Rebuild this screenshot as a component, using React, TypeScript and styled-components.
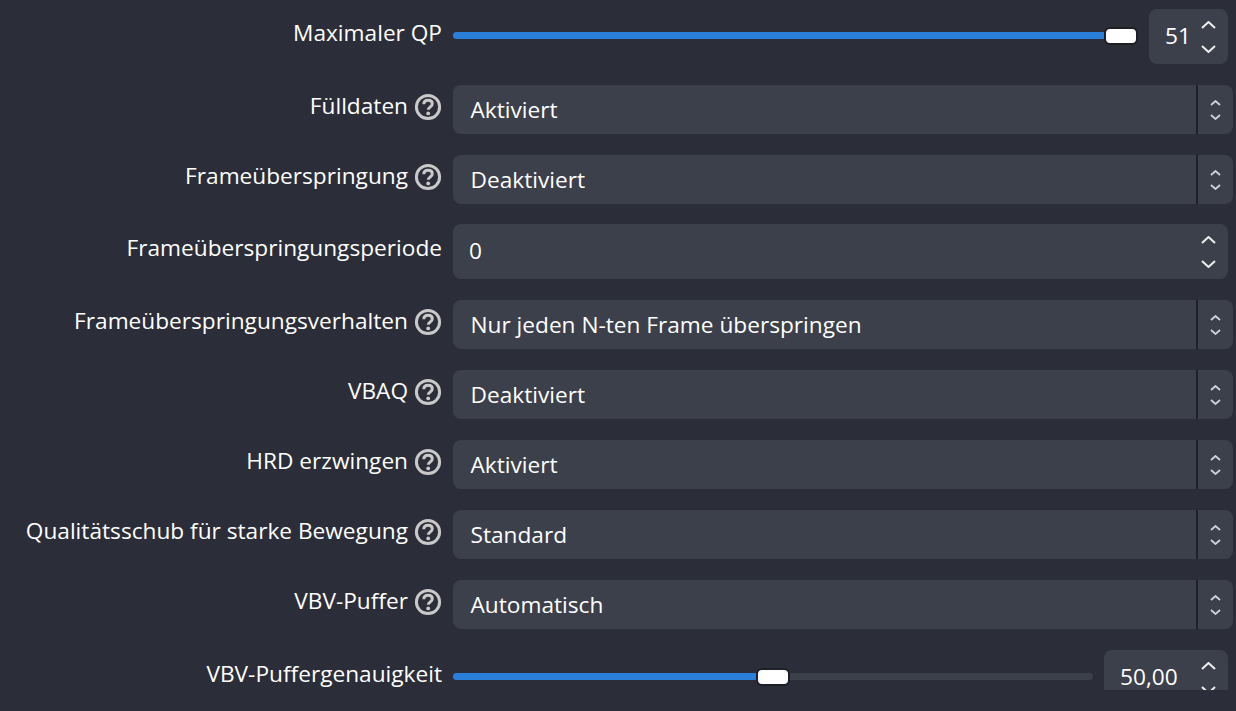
import React from 'react';
import styled, {createGlobalStyle} from 'styled-components';

const GlobalStyle = createGlobalStyle`
    html, body {
        margin: 0;
        padding: 0;
        height: 100%;
        background: #2b2e38;
    }

    body {
        font-family: "Open Sans", "Noto Sans", sans-serif;
        color: #fff;
        overflow: hidden;
    }
`;

const Viewport = styled.div`
    height: 690px;
    overflow: hidden;
`;

const Form = styled.div`
    display: grid;
    grid-template-columns: 442px 780px;
    column-gap: 11px;
    row-gap: 21px;
    padding-top: 9px;
    align-items: center;
`;

const LabelCell = styled.div`
    display: flex;
    justify-content: flex-end;
    align-items: center;
    gap: 6px;
    padding-bottom: 8px;
    font-size: 22.67px;
    line-height: 28px;
    white-space: nowrap;
`;

const HelpWrap = styled.span`
    display: flex;
    width: 28px;
    height: 28px;
    margin-bottom: -2px;
    color: #c9c9c9;
`;

const SliderRow = styled.div`
    display: flex;
    align-items: center;
    gap: 11px;
    padding-right: 5px;
`;

const Track = styled.div`
    position: relative;
    flex: 1;
    height: 7px;
    margin-top: -2px;
    border-radius: 4px;
    background: #3c404b;
`;

const Fill = styled.div<{ $value: number }>`
    width: calc((100% - 34px) * ${props => props.$value} + 4px);
    height: 100%;
    border-radius: 4px 0 0 4px;
    background: #2a7fdb;
`;

const Handle = styled.div<{ $value: number }>`
    position: absolute;
    top: -5px;
    left: calc((100% - 34px) * ${props => props.$value});
    box-sizing: border-box;
    width: 34px;
    height: 18px;
    border: 2px solid #1d1f27;
    border-radius: 6px;
    background: #fff;
`;

const SpinBox = styled.div<{ $width?: number }>`
    display: flex;
    align-items: center;
    justify-content: space-between;
    box-sizing: border-box;
    flex: none;
    width: ${props => props.$width ? `${props.$width}px` : 'auto'};
    height: 55px;
    padding: 0 12px 0 16px;
    border-radius: 8px;
    background: #3c404b;
    font-size: 22.67px;
`;

const SpinField = styled(SpinBox)`
    margin: -1px 5px 0 0;
`;

const SpinValue = styled.span`
    margin-bottom: 2px;
`;

const SpinArrows = styled.div`
    display: flex;
    flex-direction: column;
    gap: 16px;
    color: #eeeef0;
`;

const Combo = styled.div`
    display: flex;
    align-items: stretch;
    height: 49px;
    border-radius: 8px;
    background: #3c404b;
    font-size: 22.67px;
`;

const ComboText = styled.div`
    flex: 1;
    display: flex;
    align-items: center;
    padding-left: 17.5px;
    border-right: 2px solid #1f2129;
`;

const ComboArrows = styled.div`
    display: flex;
    flex-direction: column;
    align-items: center;
    justify-content: center;
    gap: 8px;
    width: 35px;
    color: #d0d1d4;
`;

const HelpIcon = () => (
    <HelpWrap>
        <svg width="28" height="28" viewBox="0 0 28 28" fill="none" stroke="currentColor">
            <circle cx="14" cy="14" r="11.6" strokeWidth="3"/>
            <path d="M9.8 11.2c0-2.6 1.9-4 4.3-4 2.5 0 4.2 1.4 4.2 3.5 0 1.6-.9 2.4-2.1 3.2-1.2.8-1.9 1.4-1.9 2.9" strokeWidth="3"/>
            <circle cx="14.2" cy="20.4" r="1.9" fill="currentColor" stroke="none"/>
        </svg>
    </HelpWrap>
);

const Chevron = ({up, width, height, strokeWidth}: { up?: boolean; width: number; height: number; strokeWidth: number }) => (
    <svg width={width} height={height} viewBox={`0 0 ${width} ${height}`} fill="none" stroke="currentColor" strokeWidth={strokeWidth}>
        <path d={up
            ? `M1 ${height - 1}L${width / 2} 1L${width - 1} ${height - 1}`
            : `M1 1L${width / 2} ${height - 1}L${width - 1} 1`}/>
    </svg>
);

const Spin = ({value, width, inField}: { value: string; width?: number; inField?: boolean }) => {
    const Box = inField ? SpinField : SpinBox;
    return (
        <Box $width={width}>
            <SpinValue>{value}</SpinValue>
            <SpinArrows>
                <Chevron up width={15} height={8} strokeWidth={2}/>
                <Chevron width={15} height={8} strokeWidth={2}/>
            </SpinArrows>
        </Box>
    );
};

const Label = ({text, help}: { text: string; help?: boolean }) => (
    <LabelCell>
        <span>{text}</span>
        {help && <HelpIcon/>}
    </LabelCell>
);

const Select = ({value}: { value: string }) => (
    <Combo>
        <ComboText>{value}</ComboText>
        <ComboArrows>
            <Chevron up width={11} height={6} strokeWidth={1.8}/>
            <Chevron width={11} height={6} strokeWidth={1.8}/>
        </ComboArrows>
    </Combo>
);

const Slider = ({fraction, value, spinWidth}: { fraction: number; value: string; spinWidth: number }) => (
    <SliderRow>
        <Track>
            <Fill $value={fraction}/>
            <Handle $value={fraction}/>
        </Track>
        <Spin value={value} width={spinWidth}/>
    </SliderRow>
);

const selects = [
    {label: 'VBAQ', value: 'Deaktiviert'},
    {label: 'HRD erzwingen', value: 'Aktiviert'},
    {label: 'Qualitätsschub für starke Bewegung', value: 'Standard'},
    {label: 'VBV-Puffer', value: 'Automatisch'},
];

const App: React.FC = () => (
    <Viewport>
        <GlobalStyle/>
        <Form>
            <Label text="Maximaler QP"/>
            <Slider fraction={1} value="51" spinWidth={79}/>

            <Label text="Fülldaten" help/>
            <Select value="Aktiviert"/>

            <Label text="Frameüberspringung" help/>
            <Select value="Deaktiviert"/>

            <Label text="Frameüberspringungsperiode"/>
            <Spin value="0" inField/>

            <Label text="Frameüberspringungsverhalten" help/>
            <Select value="Nur jeden N-ten Frame überspringen"/>

            {selects.map(item => (
                <React.Fragment key={item.label}>
                    <Label text={item.label} help/>
                    <Select value={item.value}/>
                </React.Fragment>
            ))}

            <Label text="VBV-Puffergenauigkeit"/>
            <Slider fraction={0.5} value="50,00" spinWidth={124}/>
        </Form>
    </Viewport>
);

export default App;
